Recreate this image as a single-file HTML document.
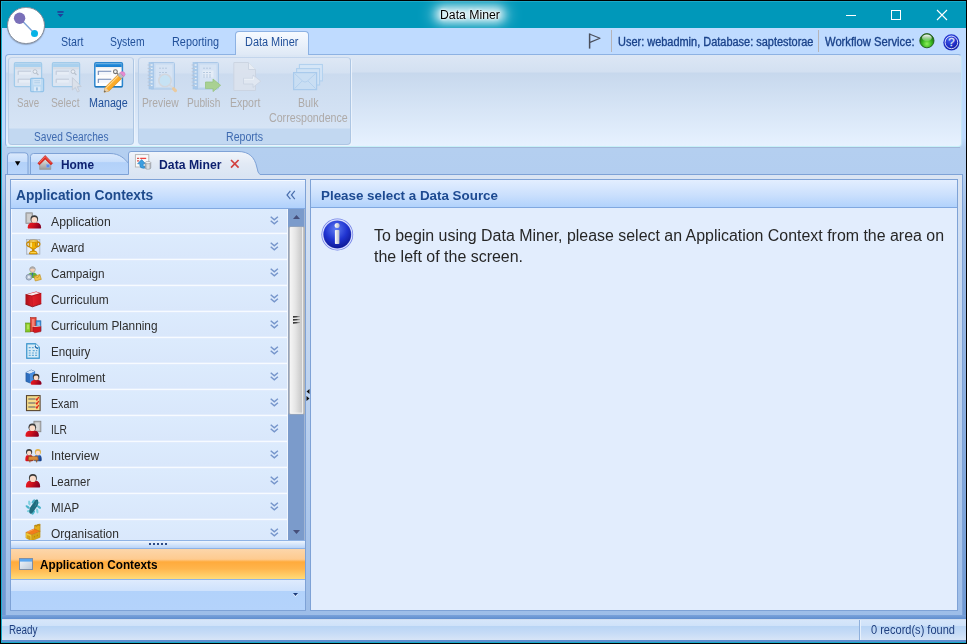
<!DOCTYPE html>
<html>
<head>
<meta charset="utf-8">
<title>Data Miner</title>
<style>
*{box-sizing:border-box;margin:0;padding:0}
html,body{width:967px;height:644px;overflow:hidden;background:#000;font-family:"Liberation Sans",sans-serif;}
.a{position:absolute}
svg{position:absolute;overflow:visible}
.t{position:absolute;white-space:nowrap;line-height:1;transform-origin:0 0;z-index:5}
#root{left:0;top:0;width:967px;height:644px;overflow:hidden}
.row{left:11px;width:277px;height:26px;background:linear-gradient(#dcebfd 0,#d9e7fb 23px,#e3edfd 23px,#e3edfd 24px,#f7fbff 24px,#f7fbff 25px,#e1ecfd 25px,#e1ecfd 26px)}
</style>
</head>
<body>
<div id="root" class="a">
<!-- window frame -->
<div class="a" style="left:1px;top:1px;width:965px;height:642px;background:#0098ba"></div>
<div class="a" style="left:1px;top:1px;width:965px;height:1px;background:#1aa9ca"></div>
<div class="a" style="left:1px;top:1px;width:1px;height:642px;background:#1aabcc"></div>
<!-- title glow -->
<div class="a" style="left:436px;top:7px;width:68px;height:15px;background:#fff;border-radius:7px;filter:blur(4px);opacity:.78"></div>
<div class="a" style="left:430px;top:4px;width:80px;height:21px;background:#fff;border-radius:10px;filter:blur(7px);opacity:.35"></div>
<!-- window buttons -->
<div class="a" style="left:846px;top:15px;width:10px;height:1px;background:#fff"></div>
<div class="a" style="left:891px;top:10px;width:10px;height:10px;border:1px solid #fff"></div>
<svg style="left:936px;top:9px" width="12" height="12" viewBox="0 0 12 12"><path d="M1 1 L11 11 M11 1 L1 11" stroke="#fff" stroke-width="1.1" fill="none"/></svg>
<!-- quick access arrow -->
<svg style="left:57px;top:11px" width="7" height="7" viewBox="0 0 7 7"><rect x="0.4" y="0.1" width="6.2" height="1.7" fill="#1f3f9a"/><path d="M0.5 3 L6.5 3 L3.5 6.2 Z" fill="#1f3f9a"/></svg>

<!-- ribbon tab row + area behind ribbon -->
<div class="a" style="left:2px;top:28px;width:964px;height:122px;background:linear-gradient(#bfdbff 0,#bfdbff 110px,#b4cff0 120px)"></div>
<div class="a" style="left:235px;top:31px;width:74px;height:24px;border:1px solid #8db2e3;border-bottom:none;border-radius:4px 4px 0 0;background:linear-gradient(#f6faff,#dfe9f6)"></div>

<!-- orb -->
<div class="a" style="left:7.4px;top:6.5px;width:37.4px;height:37.4px;border-radius:50%;background:#fff;border:1.9px solid #858d9b;box-shadow:0 1px 1px rgba(60,70,90,.35)"></div>
<svg style="left:7px;top:6px" width="38" height="38" viewBox="0 0 38 38"><line x1="13" y1="12.5" x2="27.5" y2="27.5" stroke="#7ea3d6" stroke-width="1.4"/><circle cx="12.6" cy="12.2" r="5.7" fill="#7a70b9"/><circle cx="27.5" cy="27.6" r="3.5" fill="#05b3e6"/></svg>

<!-- right status items -->
<svg style="left:587px;top:32px" width="16" height="18" viewBox="0 0 16 18"><path d="M2.6 1.4 V16.6" stroke="#4a4f5c" stroke-width="1.5" fill="none"/><path d="M3 2.2 L13 6.3 L3 10.4" fill="none" stroke="#4a4f5c" stroke-width="1.15" stroke-linejoin="round"/></svg>
<div class="a" style="left:611px;top:30px;width:1px;height:22px;background:#b6b4b8"></div>
<div class="a" style="left:818px;top:30px;width:1px;height:22px;background:#b6b4b8"></div>
<svg style="left:919px;top:33.4px" width="16" height="16" viewBox="0 0 16 16"><defs><radialGradient id="gb" cx="50%" cy="72%" r="62%"><stop offset="0" stop-color="#8cf05a"/><stop offset="0.55" stop-color="#35b31f"/><stop offset="1" stop-color="#1c6b12"/></radialGradient><linearGradient id="gh" x1="0" y1="0" x2="0" y2="1"><stop offset="0" stop-color="#fff" stop-opacity=".98"/><stop offset="1" stop-color="#fff" stop-opacity=".15"/></linearGradient></defs><circle cx="7.9" cy="7.7" r="7.1" fill="url(#gb)" stroke="#1f5a18" stroke-width=".9"/><ellipse cx="7.9" cy="4.8" rx="4.9" ry="3.3" fill="url(#gh)"/></svg>
<svg style="left:942.6px;top:33.6px" width="17" height="17" viewBox="0 0 17 17"><defs><radialGradient id="hb" cx="40%" cy="30%" r="75%"><stop offset="0" stop-color="#4a62ee"/><stop offset="0.6" stop-color="#1c2cc4"/><stop offset="1" stop-color="#0f188e"/></radialGradient></defs><circle cx="8.4" cy="8.4" r="8.1" fill="#2b3fd2"/><circle cx="8.4" cy="8.4" r="7.6" fill="url(#hb)"/><circle cx="8.4" cy="8.4" r="6.3" fill="none" stroke="#e4e8ff" stroke-width=".9"/><text x="8.5" y="12.4" font-family="Liberation Sans" font-size="11.5" text-anchor="middle" fill="#dfe3f5" stroke="#dfe3f5" stroke-width=".3">?</text></svg>
<!-- ribbon body -->
<div class="a" style="left:5px;top:54px;width:957px;height:93px;border:1px solid #8db2e3;border-bottom-color:#c6f1f9;border-right-color:#c3e6f6;border-radius:4px;background:linear-gradient(#dce7f5 0,#d3e0f1 17px,#c7d8ed 18px,#e7f2ff 92px)"></div>
<div class="a" style="left:236px;top:54px;width:72px;height:1px;background:#dfe9f6"></div>
<!-- ribbon shadow --><div class="a" style="left:7px;top:147px;width:953px;height:1px;background:#a2b8d8"></div>
<!-- groups -->
<div class="a" style="left:8px;top:57px;width:126px;height:88px;border:1px solid #adc6e3;border-top-color:#c3d5ec;border-left-color:#b9cfe9;box-shadow:1px 1px 0 rgba(236,243,252,.9);border-radius:4px;background:linear-gradient(#dee8f5 0,#d4e1f2 15px,#cbdbef 16px,#d6e4f5 70px,#c2d8f1 71px,#c2d8f1 100%)"></div>
<div class="a" style="left:138px;top:57px;width:213px;height:88px;border:1px solid #adc6e3;border-top-color:#c3d5ec;border-left-color:#b9cfe9;box-shadow:1px 1px 0 rgba(236,243,252,.9);border-radius:4px;background:linear-gradient(#dee8f5 0,#d4e1f2 15px,#cbdbef 16px,#d6e4f5 70px,#c2d8f1 71px,#c2d8f1 100%)"></div>
<!-- ribbon icons (page coordinates) -->
<svg style="left:0;top:0" width="967" height="150" viewBox="0 0 967 150">
<defs>
<linearGradient id="mb" x1="0" y1="0" x2="0" y2="1"><stop offset="0" stop-color="#cfcfcf"/><stop offset=".28" stop-color="#fbfbfb"/><stop offset="1" stop-color="#fff"/></linearGradient>
<linearGradient id="mt" x1="0" y1="0" x2="0" y2="1"><stop offset="0" stop-color="#5fb0ea"/><stop offset=".4" stop-color="#1f88d8"/><stop offset="1" stop-color="#1b7fd0"/></linearGradient>
<linearGradient id="pn" x1="0" y1="0" x2="1" y2="1"><stop offset="0" stop-color="#ffd98a"/><stop offset=".45" stop-color="#ffb02e"/><stop offset="1" stop-color="#e88a08"/></linearGradient>
<linearGradient id="nb" x1="0" y1="0" x2="1" y2="0"><stop offset="0" stop-color="#a9c8ea"/><stop offset="1" stop-color="#c9dcf2"/></linearGradient>
</defs>
<!-- Save (disabled) -->
<g><rect x="14.4" y="62.7" width="27.2" height="24" rx="1.2" fill="#dde6f2" stroke="#a2cbea" stroke-width="1.25"/><rect x="15.1" y="63.4" width="25.8" height="3.8" fill="#a9d1ef"/><rect x="15.1" y="67.2" width="25.8" height="2.2" fill="#d6dce5"/><rect x="18.4" y="71.2" width="12.4" height="3.4" fill="#e6edf6"/><path d="M18.2 74.8 V71.2 H31.0" fill="none" stroke="#bac5d6" stroke-width=".9"/><rect x="18.4" y="79.2" width="12.4" height="3.4" fill="#e6edf6"/><path d="M18.2 82.8 V79.2 H31.0" fill="none" stroke="#bac5d6" stroke-width=".9"/><circle cx="35.0" cy="71.6" r="1.9" fill="#e9eef5" stroke="#b9c2ce" stroke-width="1"/><path d="M36.4 73 L38.4 75" stroke="#b9c2ce" stroke-width="1.1"/>
<rect x="30.6" y="78.4" width="13" height="13.2" rx="1" fill="#bcdaf3" stroke="#93c3e9" stroke-width="1.2"/>
<rect x="33.4" y="79.2" width="7.6" height="5.4" fill="#d7e7f6"/><path d="M34.2 80.8 H40.2 M34.2 82.8 H40.2" stroke="#a9c9e7" stroke-width=".9"/>
<rect x="34" y="86.6" width="6.4" height="4.6" fill="#dceaf8"/><rect x="36.2" y="87.4" width="1.5" height="3.2" fill="#8fb8de"/>
</g>
<!-- Select (disabled) -->
<g><rect x="52.4" y="62.7" width="27.2" height="24" rx="1.2" fill="#dde6f2" stroke="#a2cbea" stroke-width="1.25"/><rect x="53.1" y="63.4" width="25.8" height="3.8" fill="#a9d1ef"/><rect x="53.1" y="67.2" width="25.8" height="2.2" fill="#d6dce5"/><rect x="56.4" y="71.2" width="12.4" height="3.4" fill="#e6edf6"/><path d="M56.2 74.8 V71.2 H69.0" fill="none" stroke="#bac5d6" stroke-width=".9"/><rect x="56.4" y="79.2" width="12.4" height="3.4" fill="#e6edf6"/><path d="M56.2 82.8 V79.2 H69.0" fill="none" stroke="#bac5d6" stroke-width=".9"/><circle cx="73.0" cy="71.6" r="1.9" fill="#e9eef5" stroke="#b9c2ce" stroke-width="1"/><path d="M74.4 73 L76.4 75" stroke="#b9c2ce" stroke-width="1.1"/>
<path d="M72.4 77.6 L72.4 90 L75.3 87.4 L77.5 92 L79.4 91.2 L77.3 86.7 L81.2 86.5 Z" fill="#dbe1ea" stroke="#c3cbd7" stroke-width=".9" stroke-linejoin="round"/>
</g>
<!-- Manage -->
<rect x="94.8" y="62.7" width="27.6" height="24" rx="1.2" fill="url(#mb)" stroke="#2a86cf" stroke-width="1.5"/>
<rect x="95.5" y="63.4" width="26.2" height="3.6" fill="url(#mt)"/>
<path d="M94.8 86.7 H122.4" stroke="#1f76bb" stroke-width="1.4"/>
<rect x="98.6" y="71.3" width="12.6" height="3.5" fill="#f3f6fb"/><path d="M98.3 75 V71.3 H111.3" fill="none" stroke="#6f88b5" stroke-width="1.1"/>
<rect x="98.6" y="79.3" width="12.6" height="3.5" fill="#f3f6fb"/><path d="M98.3 83 V79.3 H111.3" fill="none" stroke="#6f88b5" stroke-width="1.1"/>
<circle cx="115.4" cy="71.7" r="1.9" fill="#f4f4f4" stroke="#6f6f6f" stroke-width="1.1"/><path d="M116.8 73.1 L118.4 74.7" stroke="#6f6f6f" stroke-width="1.2"/>
<g>
<path d="M104 92.2 L105.2 87.3 L118.4 74.2 L122.2 78 L109 91.1 Z" fill="url(#pn)" stroke="#c27a12" stroke-width=".5"/>
<path d="M106 88.2 L119 75.3" stroke="#ffe3a6" stroke-width="1" fill="none"/>
<path d="M104 92.2 L105.2 87.3 L109 91.1 Z" fill="#e9cfa6"/>
<path d="M104 92.2 L104.5 90.2 L106 91.7 Z" fill="#555"/>
<path d="M117.6 75 L119.9 72.7 L123.7 76.5 L121.4 78.8 Z" fill="#b9bcc2" stroke="#8a8d93" stroke-width=".4"/>
<path d="M119.9 72.7 Q121.8 70.3 124.3 72.3 Q126.4 74.6 123.7 76.5 Z" fill="#e58bd0" stroke="#c96db5" stroke-width=".4"/>
</g>
<!-- Preview (disabled) -->
<g opacity=".92">
<rect x="150.5" y="62.5" width="24" height="26.5" rx="1" fill="#c7dbf1" stroke="#a7c6e8"/>
<rect x="149" y="62.5" width="4.6" height="26.5" fill="#a6c8ea" stroke="#9dc1e6" stroke-width=".6"/><path d="M150.2 65 h2.4 M150.2 68.4 h2.4 M150.2 71.8 h2.4 M150.2 75.2 h2.4 M150.2 78.6 h2.4 M150.2 82 h2.4 M150.2 85.4 h2.4" stroke="#e8f1fa" stroke-width="1.3"/>
<rect x="155.5" y="64.5" width="17" height="22.5" fill="#d6e4f5"/>
<path d="M159 68.2 H168 M159 72.5 H168 M159 75 H168" stroke="#b4c7de" stroke-width="1" stroke-dasharray="2 1"/>
<g stroke="#b7c4d6" stroke-width="1"><path d="M147.6 65 H151 M147.6 68.4 H151 M147.6 71.8 H151 M147.6 75.2 H151 M147.6 78.6 H151 M147.6 82 H151 M147.6 85.4 H151"/></g>
<path d="M169.6 85 L174 89.2" stroke="#d6dae0" stroke-width="2.2"/><path d="M173.6 88.8 L175.4 90.6" stroke="#ecc99a" stroke-width="3.2" stroke-linecap="round"/>
<circle cx="165" cy="80.5" r="6.2" fill="#c6e3f5" stroke="#d3d7dd" stroke-width="1.6"/>
</g>
<!-- Publish (disabled) -->
<g opacity=".92">
<rect x="194.5" y="62.5" width="24" height="26.5" rx="1" fill="#c7dbf1" stroke="#a7c6e8"/>
<rect x="193" y="62.5" width="4.6" height="26.5" fill="#a6c8ea" stroke="#9dc1e6" stroke-width=".6"/><path d="M194.2 65 h2.4 M194.2 68.4 h2.4 M194.2 71.8 h2.4 M194.2 75.2 h2.4 M194.2 78.6 h2.4 M194.2 82 h2.4 M194.2 85.4 h2.4" stroke="#e8f1fa" stroke-width="1.3"/>
<rect x="199.5" y="64.5" width="17" height="22.5" fill="#d6e4f5"/>
<rect x="202.5" y="70.5" width="11" height="7" fill="#e6eef8"/>
<path d="M203 68.2 H212 M203 72.5 H212 M203 75 H212 M203 77 H212" stroke="#b4c7de" stroke-width="1" stroke-dasharray="2 1"/>
<g stroke="#b7c4d6" stroke-width="1"><path d="M191.6 65 H195 M191.6 68.4 H195 M191.6 71.8 H195 M191.6 75.2 H195 M191.6 78.6 H195 M191.6 82 H195 M191.6 85.4 H195"/></g>
<path d="M205.5 82 H213 V79 L220.6 85.3 L213 91.6 V88.6 H205.5 Z" fill="#a6d08b" stroke="#93c279" stroke-width=".8" stroke-linejoin="round"/>
</g>
<!-- Export (disabled) -->
<g opacity=".9">
<path d="M233.8 62.5 H248.5 L255.5 69.5 V90.5 H233.8 Z" fill="#dce3ee" stroke="#cbd4e1"/>
<path d="M248.5 62.5 V69.5 H255.5" fill="#eaeff6" stroke="#cbd4e1"/>
<path d="M243.5 78.4 H253 V75 L260.8 81.2 L253 87.4 V84 H243.5 Z" fill="#e3e9f2" stroke="#c9d2df" stroke-width=".8" stroke-linejoin="round"/><path d="M244 79.2 H253.6 V76.6" fill="none" stroke="#f4f7fb" stroke-width=".9"/>
</g>
<!-- Bulk correspondence (disabled) -->
<g>
<rect x="299.4" y="64.5" width="23" height="16.4" fill="#d5e6f7" stroke="#b2d1ef" stroke-width="1.1"/>
<rect x="296.6" y="68.6" width="23" height="16.4" fill="#cfe2f5" stroke="#b0cfee" stroke-width="1.1"/>
<rect x="293.6" y="72.6" width="23" height="17" fill="#c9def3" stroke="#a9caec" stroke-width="1.2"/>
<path d="M294.4 73.4 L303 81.4 Q305 82.8 307 81.4 L315.8 73.4 M294.6 88.6 L302 81 M315.6 88.6 L308 81" fill="none" stroke="#b4d1ee" stroke-width="1"/>
</g>
</svg>
<!-- workspace background -->
<div class="a" style="left:2px;top:150px;width:964px;height:469px;background:linear-gradient(#b4cff0 0,#b3cef0 25px,#a3c0e9 60px,#86abdf 300px,#6f99d3 469px)"></div>

<!-- document tabs -->
<svg style="left:0;top:0" width="967" height="180" viewBox="0 0 967 180">
<defs>
<linearGradient id="tg" x1="0" y1="0" x2="0" y2="1"><stop offset="0" stop-color="#dbe9fc"/><stop offset=".42" stop-color="#c6ddfb"/><stop offset=".43" stop-color="#b2d1f9"/><stop offset="1" stop-color="#b9d5fa"/></linearGradient>
<linearGradient id="ag" x1="0" y1="0" x2="0" y2="1"><stop offset="0" stop-color="#f1f5fb"/><stop offset=".5" stop-color="#e2eaf5"/><stop offset="1" stop-color="#dae5f3"/></linearGradient>
</defs>
<path d="M7.5 174.5 V156 Q7.5 152.8 10.5 152.8 H25 Q28 152.8 28 156 V174.5 Z" fill="url(#tg)" stroke="#7ea2d6" stroke-width="1"/>
<path d="M30.5 174.5 V156.5 Q30.5 153.5 33.5 153.5 H110 C120 153.5 125 159 129 164 V174.5 Z" fill="url(#tg)" stroke="#7ea2d6" stroke-width="1"/>
<path d="M14.9 161.3 H20.4 L17.65 165.8 Z" fill="#000"/>
</svg>

<!-- content container -->
<div class="a" style="left:5px;top:174px;width:958px;height:442px;border:1px solid #7ea2d6;border-bottom-color:#6e97d2;background:linear-gradient(#dbe5f3 0,#d3e0f2 40px,#b8cfee 250px,#9dbde8 442px)"></div>
<svg style="left:0;top:0" width="967" height="180" viewBox="0 0 967 180">
<path d="M128.5 175.6 V154 Q128.5 151.5 131 151.5 H238 C249 151.5 254.6 157 256.8 167 Q257.8 173.4 260 174.5 V175.6 Z" fill="url(#ag)"/>
<path d="M128.5 174.5 V154 Q128.5 151.5 131 151.5 H238 C249 151.5 254.6 157 256.8 167 Q257.8 173.4 260 174.5" fill="none" stroke="#7ea2d6" stroke-width="1"/>
<path d="M231 160 L238.6 167.6 M238.6 160 L231 167.6" stroke="#d2413f" stroke-width="1.7" fill="none"/>
</svg>

<!-- doc tab icons -->
<svg style="left:0;top:0" width="300" height="180" viewBox="0 0 300 180">
<defs><linearGradient id="hw" x1="0" y1="0" x2="0" y2="1"><stop offset="0" stop-color="#efefef"/><stop offset="1" stop-color="#9c9c9c"/></linearGradient>
<linearGradient id="cy" x1="0" y1="0" x2="1" y2="0"><stop offset="0" stop-color="#9fa4aa"/><stop offset=".5" stop-color="#e9ebee"/><stop offset="1" stop-color="#a9aeb4"/></linearGradient></defs>
<!-- home -->
<path d="M39.6 169.4 V162.4 L45.2 157 L50.8 162.4 V169.4 Z" fill="url(#hw)" stroke="#8f8f8f" stroke-width=".5"/>
<rect x="46.6" y="164.6" width="2.8" height="2.6" fill="#5a8cec" stroke="#7fa6f0" stroke-width=".5"/>
<path d="M37.8 163.2 L45.2 155.4 L52.6 163.2 L51 164.9 L45.2 159.2 L39.4 164.9 Z" fill="#e02a22" stroke="#b8221a" stroke-width=".5" stroke-linejoin="round"/>
<path d="M39.2 162.8 L45.2 156.6 L51.2 162.8" fill="none" stroke="#f46a5c" stroke-width="1"/>
<!-- data miner -->
<rect x="135.4" y="154.6" width="13.4" height="12.4" fill="#fafafa" stroke="#b4b4b4" stroke-width=".9"/>
<path d="M137 158.4 H139.2 M137 160.8 H139.2" stroke="#d9534f" stroke-width="1.3"/><path d="M140.2 158.4 H146.2" stroke="#f0443e" stroke-width="1.3"/>
<path d="M141.6 159.6 L137.6 163.8 H139.9 V165.5 Q139.9 168.2 143.2 168.2 H144.6 V166 H143.4 Q143.2 166 143.2 165.5 V163.8 H145.6 Z" fill="#3d9fe0" stroke="#1f78bd" stroke-width=".6" stroke-linejoin="round"/>
<path d="M145.2 162.6 V168 Q145.2 169.3 148 169.3 Q150.8 169.3 150.8 168 V162.6 Z" fill="url(#cy)" stroke="#8a8f96" stroke-width=".5"/>
<ellipse cx="148" cy="162.6" rx="2.8" ry="1.2" fill="#eef0f2" stroke="#8a8f96" stroke-width=".5"/>
</svg>
<!-- left panel -->
<div class="a" style="left:10px;top:179px;width:296px;height:432px;border:1px solid #7ea2d6;background:#fff"></div>
<div class="a" style="left:11px;top:180px;width:294px;height:28px;background:linear-gradient(#f4f9ff 0,#f4f9ff 1px,#e1edfe 1.5px,#c9dffd 55%,#b0d1fc 100%)"></div>
<div class="a" style="left:11px;top:208px;width:294px;height:1px;background:#82a9e1"></div>
<svg style="left:286px;top:189.5px" width="10" height="10" viewBox="0 0 10 10"><path d="M4.4 0.8 L1 5 L4.4 9.2 M8.8 0.8 L5.4 5 L8.8 9.2" stroke="#4a6fae" stroke-width="1.2" fill="none"/></svg>
<div class="a row" style="top:209px"></div>
<svg style="left:270px;top:216.4px" width="9" height="9" viewBox="0 0 9 9"><path d="M0.7 0.8 L4.3 3.9 L7.9 0.8 M0.7 4.8 L4.3 7.9 L7.9 4.8" stroke="#7695cb" stroke-width="1.45" fill="none"/></svg>
<div class="a row" style="top:235px"></div>
<svg style="left:270px;top:242.4px" width="9" height="9" viewBox="0 0 9 9"><path d="M0.7 0.8 L4.3 3.9 L7.9 0.8 M0.7 4.8 L4.3 7.9 L7.9 4.8" stroke="#7695cb" stroke-width="1.45" fill="none"/></svg>
<div class="a row" style="top:261px"></div>
<svg style="left:270px;top:268.4px" width="9" height="9" viewBox="0 0 9 9"><path d="M0.7 0.8 L4.3 3.9 L7.9 0.8 M0.7 4.8 L4.3 7.9 L7.9 4.8" stroke="#7695cb" stroke-width="1.45" fill="none"/></svg>
<div class="a row" style="top:287px"></div>
<svg style="left:270px;top:294.4px" width="9" height="9" viewBox="0 0 9 9"><path d="M0.7 0.8 L4.3 3.9 L7.9 0.8 M0.7 4.8 L4.3 7.9 L7.9 4.8" stroke="#7695cb" stroke-width="1.45" fill="none"/></svg>
<div class="a row" style="top:313px"></div>
<svg style="left:270px;top:320.4px" width="9" height="9" viewBox="0 0 9 9"><path d="M0.7 0.8 L4.3 3.9 L7.9 0.8 M0.7 4.8 L4.3 7.9 L7.9 4.8" stroke="#7695cb" stroke-width="1.45" fill="none"/></svg>
<div class="a row" style="top:339px"></div>
<svg style="left:270px;top:346.4px" width="9" height="9" viewBox="0 0 9 9"><path d="M0.7 0.8 L4.3 3.9 L7.9 0.8 M0.7 4.8 L4.3 7.9 L7.9 4.8" stroke="#7695cb" stroke-width="1.45" fill="none"/></svg>
<div class="a row" style="top:365px"></div>
<svg style="left:270px;top:372.4px" width="9" height="9" viewBox="0 0 9 9"><path d="M0.7 0.8 L4.3 3.9 L7.9 0.8 M0.7 4.8 L4.3 7.9 L7.9 4.8" stroke="#7695cb" stroke-width="1.45" fill="none"/></svg>
<div class="a row" style="top:391px"></div>
<svg style="left:270px;top:398.4px" width="9" height="9" viewBox="0 0 9 9"><path d="M0.7 0.8 L4.3 3.9 L7.9 0.8 M0.7 4.8 L4.3 7.9 L7.9 4.8" stroke="#7695cb" stroke-width="1.45" fill="none"/></svg>
<div class="a row" style="top:417px"></div>
<svg style="left:270px;top:424.4px" width="9" height="9" viewBox="0 0 9 9"><path d="M0.7 0.8 L4.3 3.9 L7.9 0.8 M0.7 4.8 L4.3 7.9 L7.9 4.8" stroke="#7695cb" stroke-width="1.45" fill="none"/></svg>
<div class="a row" style="top:443px"></div>
<svg style="left:270px;top:450.4px" width="9" height="9" viewBox="0 0 9 9"><path d="M0.7 0.8 L4.3 3.9 L7.9 0.8 M0.7 4.8 L4.3 7.9 L7.9 4.8" stroke="#7695cb" stroke-width="1.45" fill="none"/></svg>
<div class="a row" style="top:469px"></div>
<svg style="left:270px;top:476.4px" width="9" height="9" viewBox="0 0 9 9"><path d="M0.7 0.8 L4.3 3.9 L7.9 0.8 M0.7 4.8 L4.3 7.9 L7.9 4.8" stroke="#7695cb" stroke-width="1.45" fill="none"/></svg>
<div class="a row" style="top:495px"></div>
<svg style="left:270px;top:502.4px" width="9" height="9" viewBox="0 0 9 9"><path d="M0.7 0.8 L4.3 3.9 L7.9 0.8 M0.7 4.8 L4.3 7.9 L7.9 4.8" stroke="#7695cb" stroke-width="1.45" fill="none"/></svg>
<div class="a row" style="top:521px"></div>
<svg style="left:270px;top:528.4px" width="9" height="9" viewBox="0 0 9 9"><path d="M0.7 0.8 L4.3 3.9 L7.9 0.8 M0.7 4.8 L4.3 7.9 L7.9 4.8" stroke="#7695cb" stroke-width="1.45" fill="none"/></svg>
<div class="a" style="left:287px;top:209px;width:1px;height:332px;background:#f2f7fe"></div>
<div class="a" style="left:11px;top:209px;width:1px;height:331px;background:#f3f8ff"></div>
<!-- list icons -->
<svg style="left:0;top:0" width="320" height="541" viewBox="0 0 320 541">
<g transform="translate(25.3 213.0)"><rect x="0.6" y="-0.2" width="6.6" height="10.6" fill="#b5b5b5" stroke="#8c8c8c" stroke-width=".7"/><rect x="1.8" y="1" width="4.2" height="8.2" fill="#cfcfcf"/><defs><linearGradient id="pa" x1="0" y1="0" x2="1" y2="0.25"><stop offset="0" stop-color="#ee1c24"/><stop offset=".5" stop-color="#cf101c"/><stop offset="1" stop-color="#8a0020"/></linearGradient></defs><path d="M2.4 14.4 Q2.4 10.0 6.8 9.4 H11.2 Q15.8 10.0 15.8 14.4 Q15.8 15.6 14.600000000000001 15.6 H3.5999999999999996 Q2.4 15.6 2.4 14.4 Z" fill="url(#pa)"/><circle cx="9" cy="6.1" r="3.8" fill="#3a3a3a"/><circle cx="9" cy="6.949999999999999" r="2.9" fill="#fbdcc9"/></g>
<g transform="translate(25.3 239.0)"><rect x="1.2" y="0.4" width="13.4" height="14.8" fill="#d3d9e3" stroke="#a3adbd" stroke-width=".7"/><rect x="2.4" y="1.6" width="11" height="12.4" fill="#e9edf3"/><path d="M3.8 1.8 H12.2 V5.4 Q12.2 9.6 8 10.2 Q3.8 9.6 3.8 5.4 Z" fill="#f0b000" stroke="#a96d00" stroke-width=".7"/><path d="M3.8 3 Q0.8 3.2 1.6 6 Q2.6 8.2 4.8 7.6 M12.2 3 Q15.2 3.2 14.4 6 Q13.4 8.2 11.2 7.6" fill="none" stroke="#c98a00" stroke-width="1.3"/><ellipse cx="8" cy="2" rx="4.2" ry="1.1" fill="#ffe070" stroke="#a96d00" stroke-width=".5"/><path d="M5.8 3.6 V8" stroke="#fff0a0" stroke-width="1.3"/><path d="M10.4 3.6 V7.6" stroke="#c98a00" stroke-width="1.2"/><rect x="6.8" y="10" width="2.4" height="2" fill="#c98a00"/><path d="M4 15 Q4 11.8 8 11.8 Q12 11.8 12 15 Z" fill="#f0b000" stroke="#a96d00" stroke-width=".6"/><path d="M5 13.6 H11" stroke="#ffe070" stroke-width=".8"/></g>
<g transform="translate(25.3 265.0)"><path d="M2.2 13 Q2.2 7.6 7.2 7.6 Q12.2 7.6 12.2 13 Z" fill="#5fb13c"/><path d="M6.6 7.8 L7.2 12.5 L7.9 7.8 Z" fill="#2f62b8"/><circle cx="7.2" cy="4.6" r="2.8" fill="#f3cfb6" stroke="#9a9a9a" stroke-width=".7"/><path d="M4.4 4.4 A2.8 2.8 0 0 1 10 4.4 Q7.2 2.4 4.4 4.4 Z" fill="#a9a9a9"/><circle cx="3.6" cy="12.2" r="2.9" fill="#b8c4d4" stroke="#7f8ea6" stroke-width=".8"/><circle cx="3.6" cy="12.2" r="1.1" fill="#e6ecf4"/><path d="M8.6 11.2 L14.6 9.6 L16 14.4 L10 16 Z" fill="#f0c24a" stroke="#b98a1c" stroke-width=".6"/><path d="M8.6 11.2 L12.6 12.6 L14.6 9.6" fill="none" stroke="#b98a1c" stroke-width=".6"/></g>
<g transform="translate(25.3 291.0)"><defs><linearGradient id="bk" x1="0" y1="0" x2="1" y2="0"><stop offset="0" stop-color="#a80d15"/><stop offset=".45" stop-color="#e0202a"/><stop offset="1" stop-color="#c8141d"/></linearGradient></defs><path d="M0.2 3.4 L10.8 0.4 L16 2.2 V12.8 L7.2 15.8 L0.2 13.2 Z" fill="url(#bk)"/><path d="M1.2 3.5 L10.8 0.9 L14.6 2.2 L6.6 4.5 Z" fill="#f6e9e9"/><path d="M0.2 3.4 L6.6 5.1 L16 2.2" fill="none" stroke="#8e0a12" stroke-width=".5"/><path d="M6.6 5.1 L7.2 15.8" stroke="#8e0a12" stroke-width=".5" opacity=".6"/><path d="M0.2 13.2 L7.2 15.8 L16 12.8" fill="none" stroke="#7e0810" stroke-width=".8"/></g>
<g transform="translate(25.3 317.0)"><rect x="0.4" y="6" width="4.8" height="9" fill="#84c625" stroke="#5a8f12" stroke-width=".6"/><rect x="1.5" y="7.4" width="2.4" height="5" fill="#b2e257"/><rect x="5.2" y="0.6" width="5.6" height="14" fill="#e0473a" stroke="#a8241a" stroke-width=".6"/><rect x="6.6" y="2" width="2.6" height="8" fill="#f38377"/><rect x="10.8" y="3.8" width="4.8" height="10" fill="#3f95dc" stroke="#1f62a6" stroke-width=".6"/><rect x="12" y="5.2" width="2.4" height="3.2" fill="#8cc6f2"/><path d="M8 10 L15.6 9.2 V14.6 L9.4 15.8 L8 14.8 Z" fill="#d3151f" stroke="#8e0d14" stroke-width=".5"/><path d="M8 10 L15.6 9.2 L14.6 8.4 L8.6 9.2 Z" fill="#f1ece6"/></g>
<g transform="translate(25.3 343.0)"><path d="M1.4 0.8 H10.2 L14 4.6 V15.2 H1.4 Z" fill="#d9ecf7" stroke="#4d9fd2" stroke-width="1.4" stroke-linejoin="round"/><path d="M10.2 0.8 V4.6 H14" fill="#eef7fc" stroke="#4d9fd2" stroke-width=".8"/><path d="M3.4 4.6 H8.4 M3.4 7.6 H6 M7.4 7.6 H12 M3.4 10 H12 M3.4 12.4 H12" stroke="#62a9d8" stroke-width="1.2" stroke-dasharray="2 1.2"/><path d="M9.8 3 Q10.6 5.4 12.6 5.6" fill="none" stroke="#1f62a6" stroke-width="1.2"/></g>
<g transform="translate(25.3 369.0)"><path d="M0.6 3.6 L6 1 L9.4 2.4 V12 L4.6 14 L0.6 12.4 Z" fill="#2e6ebf" stroke="#174a8c" stroke-width=".5"/><path d="M0.6 3.6 L6 1 L9.4 2.4 L4.6 4.8 Z" fill="#d8e6f6"/><path d="M4.6 4.8 L9.4 2.4 V12 L4.6 14 Z" fill="#4a8fe0"/><defs><linearGradient id="pe" x1="0" y1="0" x2="1" y2="0.25"><stop offset="0" stop-color="#ee1c24"/><stop offset=".5" stop-color="#cf101c"/><stop offset="1" stop-color="#8a0020"/></linearGradient></defs><path d="M5.4 14.600000000000001 Q5.4 11.6 8.600000000000001 11 H13.0 Q16.2 11.6 16.2 14.600000000000001 Q16.2 15.8 15.0 15.8 H6.6000000000000005 Q5.4 15.8 5.4 14.600000000000001 Z" fill="url(#pe)"/><circle cx="10.8" cy="8.1" r="3.3" fill="#3a3a3a"/><circle cx="10.8" cy="8.95" r="2.4" fill="#fbdcc9"/></g>
<g transform="translate(25.3 395.0)"><rect x="1.2" y="0.6" width="13.6" height="15" fill="#f4dc8a" stroke="#5a4630" stroke-width="1.1"/><path d="M3 4 H10 M3 8 H10 M3 12 H10" stroke="#8a8474" stroke-width="1.6"/><path d="M10.6 3.6 L11.6 5 L13.4 2 M10.6 7.6 L11.6 9 L13.4 6 M10.6 11.6 L11.6 13 L13.4 10" fill="none" stroke="#e02a1a" stroke-width="1.3"/></g>
<g transform="translate(25.3 421.0)"><rect x="8.6" y="0.2" width="7" height="10.6" fill="#b9b9b9" stroke="#7f7f7f" stroke-width=".7"/><rect x="10" y="1.6" width="4.2" height="7.8" fill="#d6d6d6"/><defs><linearGradient id="pi" x1="0" y1="0" x2="1" y2="0.25"><stop offset="0" stop-color="#ee1c24"/><stop offset=".5" stop-color="#cf101c"/><stop offset="1" stop-color="#8a0020"/></linearGradient></defs><path d="M0.2 14.600000000000001 Q0.2 10.2 4.8 9.6 H9.2 Q13.6 10.2 13.6 14.600000000000001 Q13.6 15.8 12.4 15.8 H1.4 Q0.2 15.8 0.2 14.600000000000001 Z" fill="url(#pi)"/><circle cx="7" cy="6.3" r="3.8" fill="#3a3a3a"/><circle cx="7" cy="7.1499999999999995" r="2.9" fill="#fbdcc9"/></g>
<g transform="translate(25.3 447.0)"><defs><linearGradient id="pl" x1="0" y1="0" x2="1" y2="0.25"><stop offset="0" stop-color="#ee1c24"/><stop offset=".5" stop-color="#cf101c"/><stop offset="1" stop-color="#8a0020"/></linearGradient></defs><path d="M0 13.0 Q0 8.799999999999999 1.5999999999999996 8.2 H6.0 Q7.8 8.799999999999999 7.8 13.0 Q7.8 14.2 6.6 14.2 H1.2 Q0 14.2 0 13.0 Z" fill="url(#pl)"/><circle cx="3.8" cy="5.1" r="3.1" fill="#3a3a3a"/><circle cx="3.8" cy="5.949999999999999" r="2.2" fill="#fbdcc9"/><defs><linearGradient id="pr" x1="0" y1="0" x2="1" y2="0.25"><stop offset="0" stop-color="#3f80e0"/><stop offset=".5" stop-color="#2b65c4"/><stop offset="1" stop-color="#163f8a"/></linearGradient></defs><path d="M8.6 13.0 Q8.6 8.799999999999999 10.399999999999999 8.2 H14.8 Q16.4 8.799999999999999 16.4 13.0 Q16.4 14.2 15.2 14.2 H9.799999999999999 Q8.6 14.2 8.6 13.0 Z" fill="url(#pr)"/><circle cx="12.6" cy="5.1" r="3.1" fill="#e0b24a"/><circle cx="12.6" cy="5.949999999999999" r="2.2" fill="#fbdcc9"/><path d="M3.6 9.4 H12.4 L13 13.2 H3 Z" fill="#d98a3a" stroke="#9a5a1c" stroke-width=".6"/><path d="M4.6 13.2 V15.4 M11.4 13.2 V15.4" stroke="#9a5a1c" stroke-width="1"/></g>
<g transform="translate(25.3 473.0)"><defs><linearGradient id="pn2" x1="0" y1="0" x2="1" y2="0.25"><stop offset="0" stop-color="#ee1c24"/><stop offset=".5" stop-color="#cf101c"/><stop offset="1" stop-color="#8a0020"/></linearGradient></defs><path d="M0.6 13.4 Q0.6 8.0 5.3999999999999995 7.4 H9.8 Q14.8 8.0 14.8 13.4 Q14.8 14.6 13.600000000000001 14.6 H1.7999999999999998 Q0.6 14.6 0.6 13.4 Z" fill="url(#pn2)"/><circle cx="7.6" cy="5.1" r="4.0" fill="#3a3a3a"/><circle cx="7.6" cy="5.949999999999999" r="3.1" fill="#fbdcc9"/></g>
<g transform="translate(25.3 499.0)"><ellipse cx="13.60" cy="8.00" rx="2.5" ry="1.15" transform="rotate(35 13.60 8.00)" fill="#4ab4ca"/><ellipse cx="11.96" cy="11.96" rx="2.5" ry="1.15" transform="rotate(80 11.96 11.96)" fill="#7fd0df"/><ellipse cx="8.00" cy="13.60" rx="2.5" ry="1.15" transform="rotate(125 8.00 13.60)" fill="#4ab4ca"/><ellipse cx="4.04" cy="11.96" rx="2.5" ry="1.15" transform="rotate(170 4.04 11.96)" fill="#7fd0df"/><ellipse cx="2.40" cy="8.00" rx="2.5" ry="1.15" transform="rotate(215 2.40 8.00)" fill="#4ab4ca"/><ellipse cx="4.04" cy="4.04" rx="2.5" ry="1.15" transform="rotate(260 4.04 4.04)" fill="#7fd0df"/><ellipse cx="8.00" cy="2.40" rx="2.5" ry="1.15" transform="rotate(305 8.00 2.40)" fill="#4ab4ca"/><ellipse cx="11.96" cy="4.04" rx="2.5" ry="1.15" transform="rotate(350 11.96 4.04)" fill="#7fd0df"/><path d="M12.6 0.8 Q13.6 4.6 11.6 7.8 Q9.4 11 6.8 14.2 Q5 15.6 4 13.4 Q3.6 10 6.2 6.6 Q8.6 3.4 9.6 1.4 Q11.2 0 12.6 0.8 Z" fill="#1f6c7e"/><path d="M11.6 2.2 Q11.6 5 9.6 7.6" fill="none" stroke="#2d8496" stroke-width="1"/></g>
<g transform="translate(25.3 525.0)"><path d="M9.2 0.6 L14.8 -1 V6.6 L9.2 4.6 Z" fill="#e3ae1a" stroke="#a8780a" stroke-width=".5"/><path d="M9.2 0.6 L10.6 0.2 V1.4 L12 1 V-0.2 L13.4 -0.6 V0.6 L14.8 0.2" fill="none" stroke="#a8780a" stroke-width=".6"/><path d="M0.6 7.4 L8.8 3.8 L14.8 6.4 L6.6 10 Z" fill="#f27c1a" stroke="#c8600c" stroke-width=".4"/><path d="M1.8 7.3 L8.6 4.4" stroke="#ffa04a" stroke-width="1"/><path d="M0.6 7.4 L6.6 10 V15.8 L0.6 13 Z" fill="#f4cb36" stroke="#b38410" stroke-width=".4"/><path d="M6.6 10 L14.8 6.4 V12.4 L6.6 15.8 Z" fill="#d7a414" stroke="#b38410" stroke-width=".4"/><path d="M2.2 10.4 L4.8 11.5 V14.6 L2.2 13.5 Z" fill="#d9a514" stroke="#b38410" stroke-width=".4"/><path d="M8.6 11.2 L9.8 10.7 V12.3 L8.6 12.8 Z M11.4 10 L12.6 9.5 V11.1 L11.4 11.6 Z" fill="#b98a0e"/></g>
</svg>

<!-- scrollbar -->
<div class="a" style="left:288px;top:209px;width:17px;height:332px;background:#7b9bcb"></div>
<div class="a" style="left:304px;top:209px;width:1px;height:332px;background:#a3b6d3"></div>
<svg style="left:292.9px;top:214.9px" width="7" height="4" viewBox="0 0 7 4"><path d="M0 4 L3.5 0 L7 4 Z" fill="#464f7a"/></svg>
<svg style="left:292.9px;top:529.9px" width="7" height="4" viewBox="0 0 7 4"><path d="M0 0 L7 0 L3.5 4 Z" fill="#464f7a"/></svg>
<svg style="left:0;top:0" width="320" height="430" viewBox="0 0 320 430"><defs><linearGradient id="th" x1="0" y1="0" x2="1" y2="0"><stop offset="0" stop-color="#f6f6f6"/><stop offset=".4" stop-color="#e6e6e6"/><stop offset=".88" stop-color="#c9c9c9"/><stop offset=".93" stop-color="#ececec"/><stop offset="1" stop-color="#ececec"/></linearGradient></defs>
<rect x="288.3" y="226.4" width="16.7" height="188.2" rx="1.6" fill="#a4a9b2"/>
<rect x="303" y="227" width="2" height="187" fill="#b6b6b6"/>
<rect x="289.8" y="227.1" width="13.4" height="186.6" rx="1" fill="url(#th)"/>
<path d="M290.4 413.2 H303" stroke="#f4f4f4" stroke-width="1"/>
<defs><linearGradient id="gl" x1="0" y1="0" x2="1" y2="0"><stop offset="0" stop-color="#333"/><stop offset=".5" stop-color="#444"/><stop offset="1" stop-color="#888" stop-opacity=".5"/></linearGradient></defs>
<path d="M293 316.1 H300 V316.9 L293 317.8 Z M293 319.1 H300 V319.9 L293 320.8 Z M293 322.1 H300 V322.9 L293 323.8 Z" fill="url(#gl)"/>
</svg>

<!-- splitter grip strip -->
<div class="a" style="left:11px;top:540px;width:294px;height:9px;z-index:6;border-top:1px solid #8fb3e6;border-bottom:1px solid #8fb3e6;background:linear-gradient(#eef5fe,#b9d4f8)"></div>
<div class="a" style="left:149px;top:543px;width:2px;height:2px;z-index:7;background:#2c4a86;box-shadow:4px 0 0 #2c4a86,8px 0 0 #2c4a86,12px 0 0 #2c4a86,16px 0 0 #2c4a86"></div>
<!-- orange bar -->
<div class="a" style="left:11px;top:549px;width:294px;height:31px;border-bottom:1px solid #8fb3e6;background:linear-gradient(#fcd6aa 0,#fecb90 34%,#ffab3c 43%,#ffb54c 66%,#ffdb78 100%)"></div>
<svg style="left:19px;top:558px" width="14" height="12" viewBox="0 0 14 12"><defs><linearGradient id="wi" x1="0" y1="0" x2="1" y2="1"><stop offset="0" stop-color="#f4f8fc"/><stop offset="1" stop-color="#b9c7d6"/></linearGradient></defs><rect x=".5" y=".5" width="13" height="11" fill="url(#wi)" stroke="#7f8fa6"/><rect x="1" y="1" width="12" height="2.6" fill="#5aa6ee"/></svg>
<!-- lower strip -->
<div class="a" style="left:11px;top:580px;width:294px;height:30px;background:linear-gradient(#deebfd 0,#cfe2fc 35%,#b2d2fb 37%,#b4d3fb 100%)"></div>
<svg style="left:293px;top:593px" width="5" height="4" viewBox="0 0 5 4"><path d="M0 1 H5 L2.5 4 Z" fill="#eef5ff"/><path d="M0 0 H5 L2.5 3 Z" fill="#1c3c7c"/></svg>

<!-- splitter arrows -->
<svg style="left:306px;top:389px" width="4" height="12" viewBox="0 0 4 12"><path d="M3.5 0 V5 L0.5 2.5 Z M0.5 7 V12 L3.5 9.5 Z" fill="#111"/></svg>

<!-- right panel -->
<div class="a" style="left:310px;top:179px;width:648px;height:432px;border:1px solid #7ea2d6;background:#e2edfd"></div>
<div class="a" style="left:311px;top:180px;width:646px;height:27px;background:linear-gradient(#e3eeff 0,#cbe0fd 55%,#b1d2fc 100%)"></div>
<div class="a" style="left:311px;top:207px;width:646px;height:1px;background:#80a8e0"></div>
<!-- info icon -->
<svg style="left:321px;top:218px" width="33" height="33" viewBox="0 0 33 33"><defs><radialGradient id="ib" cx="45%" cy="30%" r="75%"><stop offset="0" stop-color="#5f7cf2"/><stop offset=".55" stop-color="#1f33d0"/><stop offset="1" stop-color="#0c148c"/></radialGradient><linearGradient id="ii" x1="0" y1="0" x2="1" y2="0"><stop offset="0" stop-color="#fff"/><stop offset="1" stop-color="#b8bcc8"/></linearGradient></defs><circle cx="16.3" cy="16.5" r="15.9" fill="#6f7fe6"/><circle cx="16.3" cy="16.5" r="14.6" fill="none" stroke="#dfe4ff" stroke-width="1.1"/><circle cx="16.3" cy="16.5" r="13.7" fill="url(#ib)"/><circle cx="16.1" cy="7.6" r="2.5" fill="url(#ii)"/><rect x="13.9" y="12" width="4.5" height="14" rx=".8" fill="url(#ii)"/></svg>

<!-- bottom frame bands -->
<div class="a" style="left:2px;top:615px;width:964px;height:4px;background:linear-gradient(#7aa2da,#608ecf)"></div>
<!-- status bar -->
<div class="a" style="left:2px;top:619px;width:964px;height:21px;background:linear-gradient(#cfddf0 0,#cfddf0 1px,#d6e6fa 1px,#cfe2f9 7px,#b9d5f5 7.5px,#c6dbf6 14px,#d7e5f7 21px)"></div>
<div class="a" style="left:859px;top:620px;width:1px;height:20px;background:#8fb0dc"></div>
<div class="a" style="left:860px;top:620px;width:1px;height:20px;background:#e6f0fc"></div>
<div class="a" style="left:2px;top:640px;width:964px;height:2px;background:#5e8fd0"></div>
<div class="a" style="left:1px;top:642px;width:965px;height:1px;background:#17a9c9"></div>
<div class="t" style="left:440.20px;top:8.61px;font-size:12.5px;color:#000;transform:scaleX(0.9794);text-shadow:0 0 2px #fff,0 0 4px #fff;">Data Miner</div>
<div class="t" style="left:61.00px;top:36.33px;font-size:12px;color:#21509a;transform:scaleX(0.8875);">Start</div>
<div class="t" style="left:110.00px;top:36.33px;font-size:12px;color:#21509a;transform:scaleX(0.8623);">System</div>
<div class="t" style="left:171.60px;top:36.33px;font-size:12px;color:#21509a;transform:scaleX(0.9050);">Reporting</div>
<div class="t" style="left:245.20px;top:36.33px;font-size:12px;color:#21509a;transform:scaleX(0.9098);">Data Miner</div>
<div class="t" style="left:617.50px;top:36.33px;font-size:12px;color:#1a428a;transform:scaleX(0.9129);-webkit-text-stroke:0.35px #1a428a;">User: webadmin, Database: saptestorae</div>
<div class="t" style="left:824.50px;top:36.33px;font-size:12px;color:#1a428a;transform:scaleX(0.9342);-webkit-text-stroke:0.35px #1a428a;">Workflow Service:</div>
<div class="t" style="left:16.60px;top:97.03px;font-size:12px;color:#aeaaa8;transform:scaleX(0.8078);">Save</div>
<div class="t" style="left:51.40px;top:97.03px;font-size:12px;color:#aeaaa8;transform:scaleX(0.8544);">Select</div>
<div class="t" style="left:89.00px;top:97.03px;font-size:12px;color:#21509a;transform:scaleX(0.8949);">Manage</div>
<div class="t" style="left:142.00px;top:97.03px;font-size:12px;color:#aeaaa8;transform:scaleX(0.8570);">Preview</div>
<div class="t" style="left:187.40px;top:97.03px;font-size:12px;color:#aeaaa8;transform:scaleX(0.8463);">Publish</div>
<div class="t" style="left:230.00px;top:97.03px;font-size:12px;color:#aeaaa8;transform:scaleX(0.8760);">Export</div>
<div class="t" style="left:297.90px;top:97.03px;font-size:12px;color:#aeaaa8;transform:scaleX(0.8761);">Bulk</div>
<div class="t" style="left:268.60px;top:111.73px;font-size:12px;color:#aeaaa8;transform:scaleX(0.8878);">Correspondence</div>
<div class="t" style="left:34.40px;top:130.73px;font-size:12px;color:#3e6ab0;transform:scaleX(0.8461);">Saved Searches</div>
<div class="t" style="left:226.20px;top:130.73px;font-size:12px;color:#3e6ab0;transform:scaleX(0.8807);">Reports</div>
<div class="t" style="left:60.50px;top:158.51px;font-size:12.5px;color:#0c1f6e;font-weight:bold;transform:scaleX(0.9524);">Home</div>
<div class="t" style="left:158.50px;top:158.51px;font-size:12.5px;color:#0c1f6e;font-weight:bold;transform:scaleX(0.9780);">Data Miner</div>
<div class="t" style="left:16.40px;top:188.22px;font-size:14.3px;color:#1e4a8c;font-weight:bold;transform:scaleX(0.9596);">Application Contexts</div>
<div class="t" style="left:321.00px;top:188.86px;font-size:13.4px;color:#1d4a91;font-weight:bold;transform:scaleX(0.9989);">Please select a Data Source</div>
<div class="t" style="left:374.00px;top:227.70px;font-size:16px;color:#262626;transform:scaleX(0.9951);">To begin using Data Miner, please select an Application Context from the area on</div>
<div class="t" style="left:374.00px;top:248.70px;font-size:16px;color:#262626;transform:scaleX(0.9973);">the left of the screen.</div>
<div class="t" style="left:51.00px;top:215.00px;font-size:13px;color:#2e2e2e;transform:scaleX(0.9385);">Application</div>
<div class="t" style="left:51.00px;top:241.00px;font-size:13px;color:#2e2e2e;transform:scaleX(0.9095);">Award</div>
<div class="t" style="left:51.00px;top:267.00px;font-size:13px;color:#2e2e2e;transform:scaleX(0.9045);">Campaign</div>
<div class="t" style="left:51.00px;top:293.00px;font-size:13px;color:#2e2e2e;transform:scaleX(0.9164);">Curriculum</div>
<div class="t" style="left:51.00px;top:319.00px;font-size:13px;color:#2e2e2e;transform:scaleX(0.9098);">Curriculum Planning</div>
<div class="t" style="left:51.00px;top:345.00px;font-size:13px;color:#2e2e2e;transform:scaleX(0.8934);">Enquiry</div>
<div class="t" style="left:51.00px;top:371.00px;font-size:13px;color:#2e2e2e;transform:scaleX(0.9181);">Enrolment</div>
<div class="t" style="left:51.00px;top:397.00px;font-size:13px;color:#2e2e2e;transform:scaleX(0.8209);">Exam</div>
<div class="t" style="left:51.00px;top:423.00px;font-size:13px;color:#2e2e2e;transform:scaleX(0.7899);">ILR</div>
<div class="t" style="left:51.00px;top:449.00px;font-size:13px;color:#2e2e2e;transform:scaleX(0.9249);">Interview</div>
<div class="t" style="left:51.00px;top:475.00px;font-size:13px;color:#2e2e2e;transform:scaleX(0.8749);">Learner</div>
<div class="t" style="left:51.00px;top:501.00px;font-size:13px;color:#2e2e2e;transform:scaleX(0.8864);">MIAP</div>
<div class="t" style="left:51.00px;top:527.00px;font-size:13px;color:#2e2e2e;transform:scaleX(0.9212);">Organisation</div>
<div class="t" style="left:39.50px;top:558.53px;font-size:12px;color:#000;font-weight:bold;transform:scaleX(0.9791);">Application Contexts</div>
<div class="t" style="left:8.70px;top:623.63px;font-size:12px;color:#1f3f7f;transform:scaleX(0.8214);">Ready</div>
<div class="t" style="left:871.00px;top:623.63px;font-size:12px;color:#1f3f7f;transform:scaleX(0.9189);">0 record(s) found</div>
</div>
</body>
</html>
